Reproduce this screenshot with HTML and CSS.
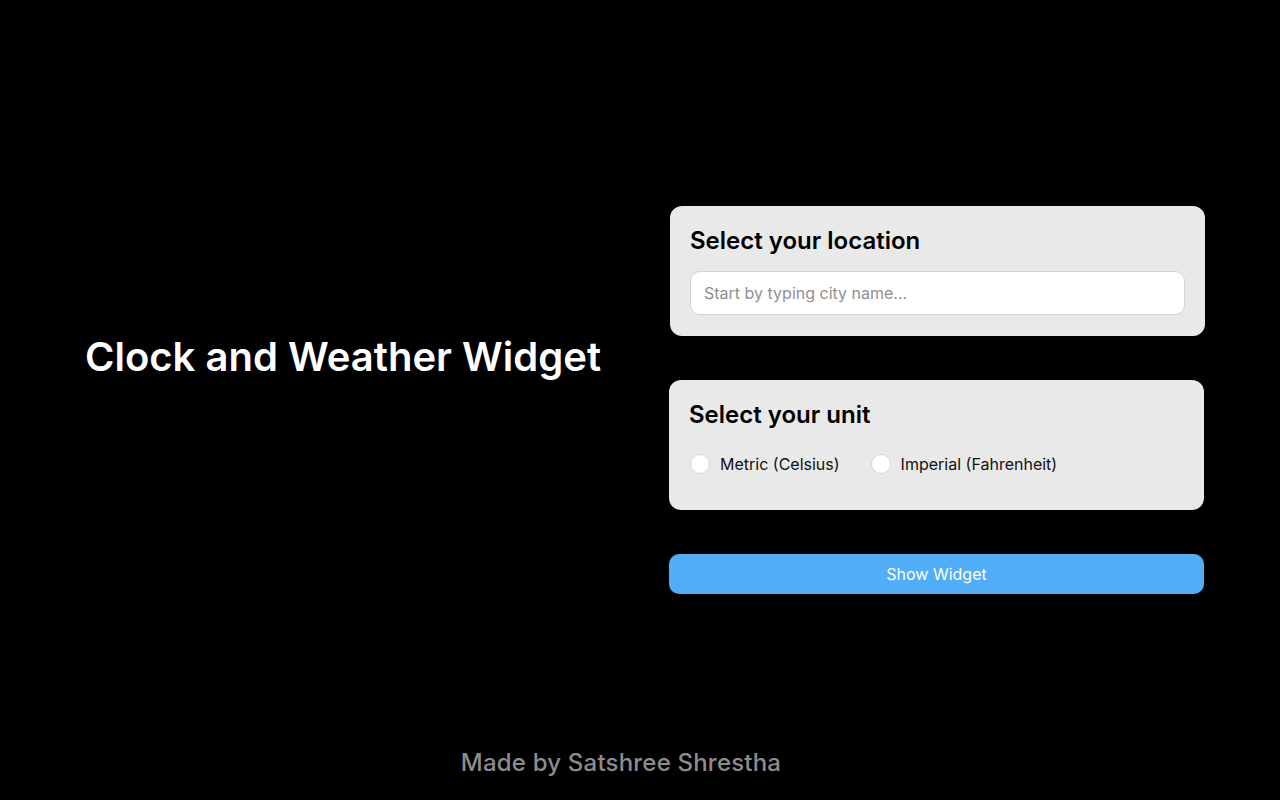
FILE: index.html
```html
<!DOCTYPE html>
<html lang="en">
<head>
<meta charset="utf-8">
<title>Clock and Weather Widget</title>
<link rel="stylesheet" href="styles.css">
</head>
<body>
<div class="page">
  <main class="main">
    <div class="intro">
      <h1 class="title">Clock and Weather Widget</h1>
    </div>
    <div class="form">
      <section class="card card-location">
        <h2 class="card-title">Select your location</h2>
        <input class="city-input" type="text" placeholder="Start by typing city name...">
      </section>
      <section class="card card-unit">
        <h2 class="card-title">Select your unit</h2>
        <div class="radios">
          <label class="radio"><span class="radio-dot"></span><span class="radio-label">Metric (Celsius)</span></label>
          <label class="radio"><span class="radio-dot"></span><span class="radio-label">Imperial (Fahrenheit)</span></label>
        </div>
      </section>
      <button class="show-btn" type="button">Show Widget</button>
    </div>
  </main>
  <footer class="footer">Made by Satshree Shrestha</footer>
</div>
</body>
</html>
```
FILE: styles.css
```css
* { box-sizing: border-box; }
html, body { margin: 0; padding: 0; background: #000; }
body { font-family: Inter, "Noto Sans", sans-serif; color: #000; }
.page { height: 800px; display: flex; flex-direction: column; }
.main {
  flex: 1;
  display: flex;
  align-items: center;
  padding: 76px 76px 0 86px;
  gap: 68px;
}
.intro { flex: 1; margin-bottom: 86px; }
.title {
  margin: 0;
  margin-left: -1px;
  color: #fff;
  font-size: 40px;
  font-weight: 600;
  line-height: 48px;
  white-space: nowrap;
}
.form { width: 535px; display: flex; flex-direction: column; gap: 44px; margin-left: -1px; }
.card {
  background: #e9e9e9;
  border-radius: 12px;
  padding: 20px 20px 20px 20px;
  height: 130px;
}
.card-location { margin-left: 1px; margin-right: -1px; }
.card-title {
  margin: 0 0 18px;
  font-size: 24px;
  font-weight: 600;
  line-height: 29px;
}
.card-location .card-title { margin-bottom: 16px; }
.city-input {
  display: block;
  width: 100%;
  height: 44px;
  border: 1px solid #d3d3d3;
  border-radius: 10px;
  background: #fff;
  padding: 0 13px;
  font-family: Inter, "Noto Sans", sans-serif;
  font-size: 16px;
  outline: none;
}
.city-input::placeholder { color: #8f8f8f; }
.radios { display: flex; gap: 31px; margin: 25px 0 0 1px; }
.radio { display: flex; align-items: center; gap: 10px; font-size: 16px; line-height: 20px; }
.radio-dot {
  width: 20px; height: 20px; border-radius: 50%;
  background: #fff; border: 1px solid #d6d6d6;
}
.radio-label { color: #111; }
.show-btn {
  height: 40px;
  border: none;
  border-radius: 10px;
  background: #51adf5;
  color: #fff;
  font-family: Inter, "Noto Sans", sans-serif;
  font-size: 16px;
  cursor: pointer;
}
.footer {
  height: 76px;
  text-align: center;
  color: #8c8c8c;
  font-size: 24px;
  font-weight: 500;
  line-height: 29px;
  padding: 24px 38px 0 0;
  letter-spacing: 0.2px;
}
```
